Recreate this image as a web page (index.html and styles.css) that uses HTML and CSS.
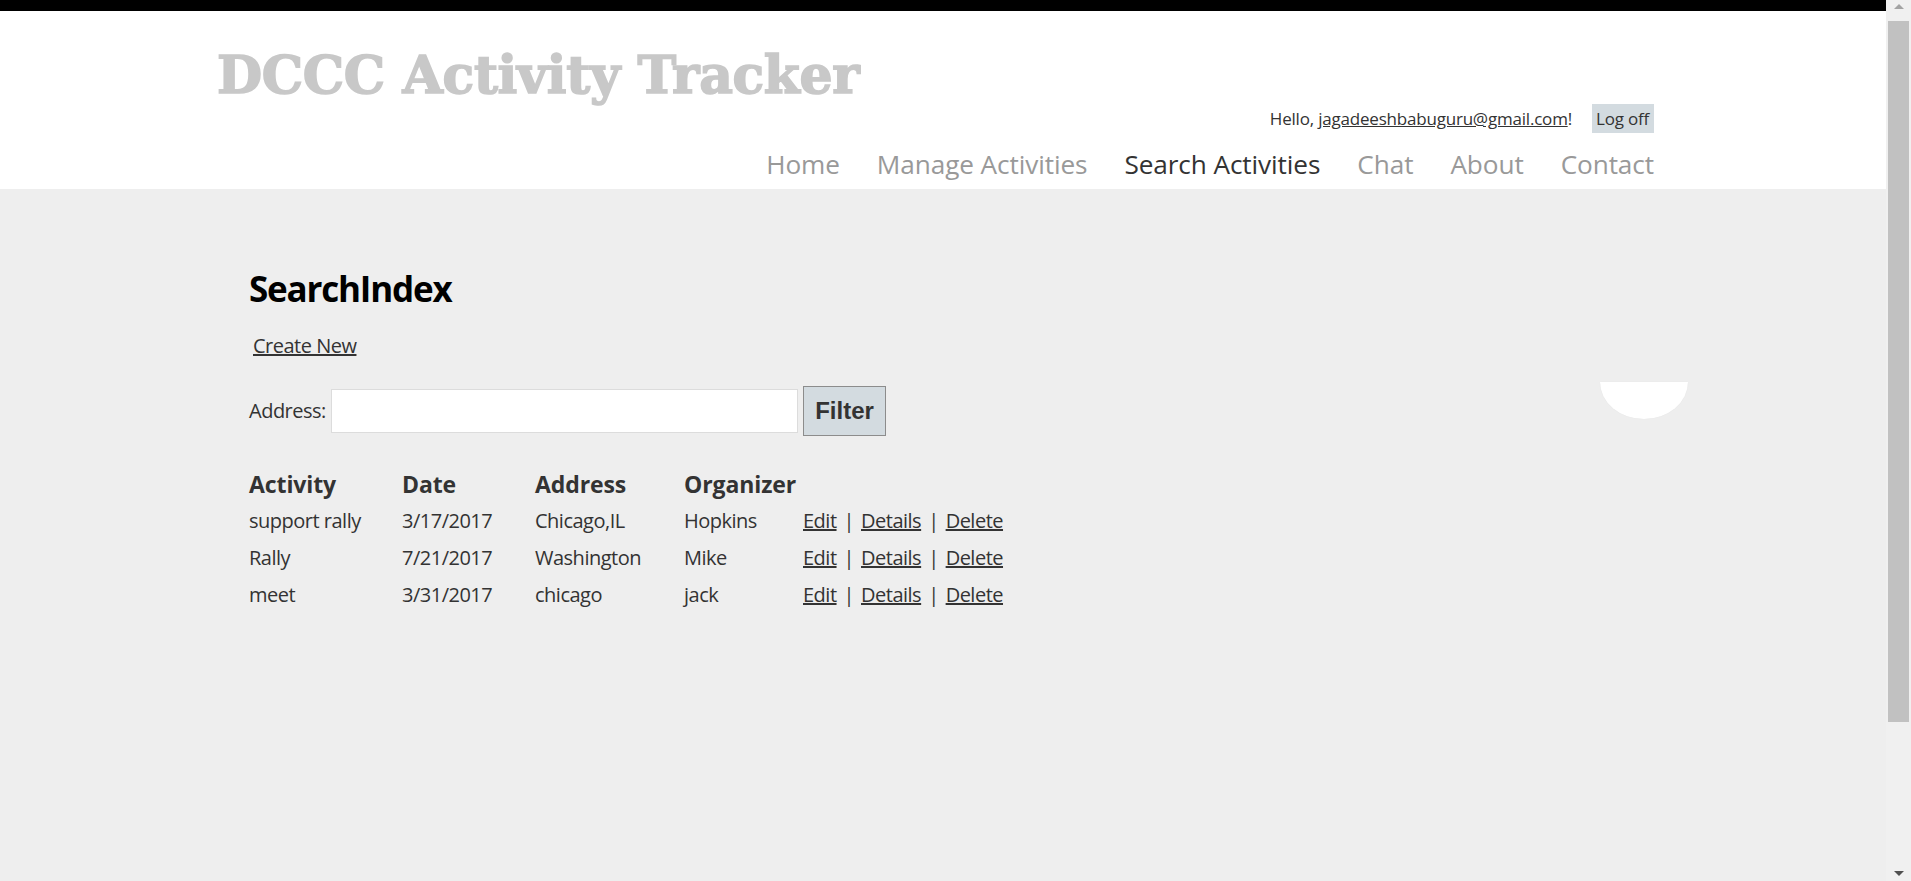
FILE: index.html
```html
<!DOCTYPE html>
<html lang="en">
<head>
<meta charset="utf-8">
<title>SearchIndex - DCCC Activity Tracker</title>
<link rel="stylesheet" href="styles.css">
</head>
<body>
<div class="page">
  <div class="topbar"></div>
  <header class="site-header">
    <div class="header-inner">
      <div class="site-title">DCCC Activity Tracker</div>
      <div class="login-row">
        <span class="hello">Hello, <a href="#" class="user-link">jagadeeshbabuguru@gmail.com</a>!</span>
        <a href="#" class="logoff">Log off</a>
      </div>
      <nav class="menu">
        <a href="#" class="menu-item">Home</a>
        <a href="#" class="menu-item">Manage Activities</a>
        <a href="#" class="menu-item active">Search Activities</a>
        <a href="#" class="menu-item">Chat</a>
        <a href="#" class="menu-item">About</a>
        <a href="#" class="menu-item">Contact</a>
      </nav>
    </div>
  </header>
  <main class="body-content">
    <h2 class="page-title">SearchIndex</h2>
    <p class="create"><a href="#" class="link">Create New</a></p>
    <form class="filter-row">
      <label class="filter-label" for="addr">Address:</label>
      <input id="addr" class="filter-input" type="text">
      <button type="button" class="filter-btn">Filter</button>
    </form>
    <table class="grid">
      <colgroup>
        <col class="c1"><col class="c2"><col class="c3"><col class="c4"><col class="c5">
      </colgroup>
      <thead>
        <tr><th>Activity</th><th>Date</th><th>Address</th><th>Organizer</th><th></th></tr>
      </thead>
      <tbody>
        <tr><td>support rally</td><td>3/17/2017</td><td>Chicago,IL</td><td>Hopkins</td><td class="actions"><a href="#" class="link">Edit</a> | <a href="#" class="link">Details</a> | <a href="#" class="link">Delete</a></td></tr>
        <tr><td>Rally</td><td>7/21/2017</td><td>Washington</td><td>Mike</td><td class="actions"><a href="#" class="link">Edit</a> | <a href="#" class="link">Details</a> | <a href="#" class="link">Delete</a></td></tr>
        <tr><td>meet</td><td>3/31/2017</td><td>chicago</td><td>jack</td><td class="actions"><a href="#" class="link">Edit</a> | <a href="#" class="link">Details</a> | <a href="#" class="link">Delete</a></td></tr>
      </tbody>
    </table>
  </main>
  <div class="bubble"></div>
</div>
<div class="scrollbar">
  <div class="sb-arrow sb-up"></div>
  <div class="sb-track"><div class="sb-thumb"></div></div>
  <div class="sb-arrow sb-down"></div>
</div>
</body>
</html>
```
FILE: styles.css
```css
html, body {
  margin: 0;
  padding: 0;
  height: 881px;
  overflow: hidden;
}
body {
  display: flex;
  font-family: "Open Sans", "Noto Sans", sans-serif;
  color: #333;
  background: #eeeeee;
}
.page {
  flex: 1;
  position: relative;
  display: flex;
  flex-direction: column;
  background: #eeeeee;
}
.topbar {
  height: 11px;
  background: #000;
}
.site-header {
  background: #fff;
  height: 178px;
}
.header-inner {
  margin: 0 232px 0 217px;
  padding-top: 38px;
  display: flex;
  flex-direction: column;
}
.site-title {
  font-family: "DejaVu Serif", serif;
  font-weight: bold;
  font-size: 52px;
  line-height: 52px;
  color: #c8c8c8;
  letter-spacing: -0.35px;
  -webkit-text-stroke: 1.6px #c8c8c8;
}
.login-row {
  margin-top: 3px;
  height: 29px;
  display: flex;
  justify-content: flex-end;
  align-items: center;
  font-size: 17px;
  letter-spacing: -0.2px;
  line-height: 29px;
}
.hello { color: #333; }
.user-link { color: #333; text-decoration: underline; }
.logoff {
  margin-left: 20px;
  padding: 0 5px 0 4px;
  background: #d3dbe0;
  color: #333;
  text-decoration: none;
  height: 29px;
}
.menu {
  margin-top: 5px;
  display: flex;
  justify-content: flex-end;
  gap: 37px;
  font-size: 26.2px;
  line-height: 52px;
  letter-spacing: -0.1px;
}
.menu-item {
  color: #999;
  text-decoration: none;
}
.menu-item.active { color: #333; }

.body-content {
  padding: 81px 0 0 249px;
  font-size: 20px;
  letter-spacing: -0.5px;
}
.page-title {
  margin: 0;
  font-size: 35px;
  line-height: 38.5px;
  font-weight: bold;
  color: #000;
  letter-spacing: -1.2px;
}
.create {
  margin: 23.5px 0 0 4px;
  line-height: 28px;
}
.link { color: #333; text-decoration: underline; }
.filter-row {
  margin-top: 26px;
  height: 50px;
  display: flex;
  align-items: center;
  line-height: 28px;
}
.filter-label { margin-right: 6px; width: 76px; }
.filter-input {
  box-sizing: border-box;
  width: 467px;
  height: 44px;
  border: 1px solid #dcdcdc;
  background: #fff;
  margin: 0;
  padding: 4px 8px;
}
.filter-btn {
  box-sizing: border-box;
  margin: 0 0 0 5px;
  width: 83px;
  height: 50px;
  background: #d3dbe0;
  border: 1px solid #8c8c8c;
  font-family: "Liberation Sans", Arial, sans-serif;
  font-weight: bold;
  font-size: 24px;
  color: #333;
  padding: 0;
  letter-spacing: 0;
}
.grid {
  margin-top: 32px;
  border-collapse: collapse;
  table-layout: fixed;
  width: 770px;
}
.c1 { width: 153px; }
.c2 { width: 133px; }
.c3 { width: 149px; }
.c4 { width: 119px; }
.c5 { width: 216px; }
.grid th {
  text-align: left;
  padding: 0;
  font-size: 23px;
  font-weight: bold;
  line-height: 33.7px;
  letter-spacing: -0.1px;
  color: #333;
  white-space: nowrap;
}
.grid td {
  padding: 0;
  line-height: 37px;
  color: #333;
  white-space: nowrap;
}
.actions { word-spacing: 2.3px; }
.bubble {
  position: absolute;
  left: 1600px;
  top: 382px;
  width: 88px;
  height: 37px;
  background: #fff;
  border-radius: 0 0 44px 44px / 0 0 37px 37px;
  box-shadow: 0 0 1px rgba(0,0,0,0.08);
}
.scrollbar {
  width: 25px;
  background: #f0f0f0;
  display: flex;
  flex-direction: column;
  align-items: center;
}
.sb-arrow {
  width: 0;
  height: 0;
  border-left: 5px solid transparent;
  border-right: 5px solid transparent;
}
.sb-up {
  margin-top: 4px;
  border-bottom: 5px solid #a3a3a3;
}
.sb-down {
  margin-bottom: 5px;
  border-top: 5px solid #505050;
}
.sb-track {
  flex: 1;
  width: 100%;
  padding-top: 12px;
  box-sizing: border-box;
}
.sb-thumb {
  margin: 0 2px 0 2px;
  height: 701px;
  background: #c1c1c1;
}
```
